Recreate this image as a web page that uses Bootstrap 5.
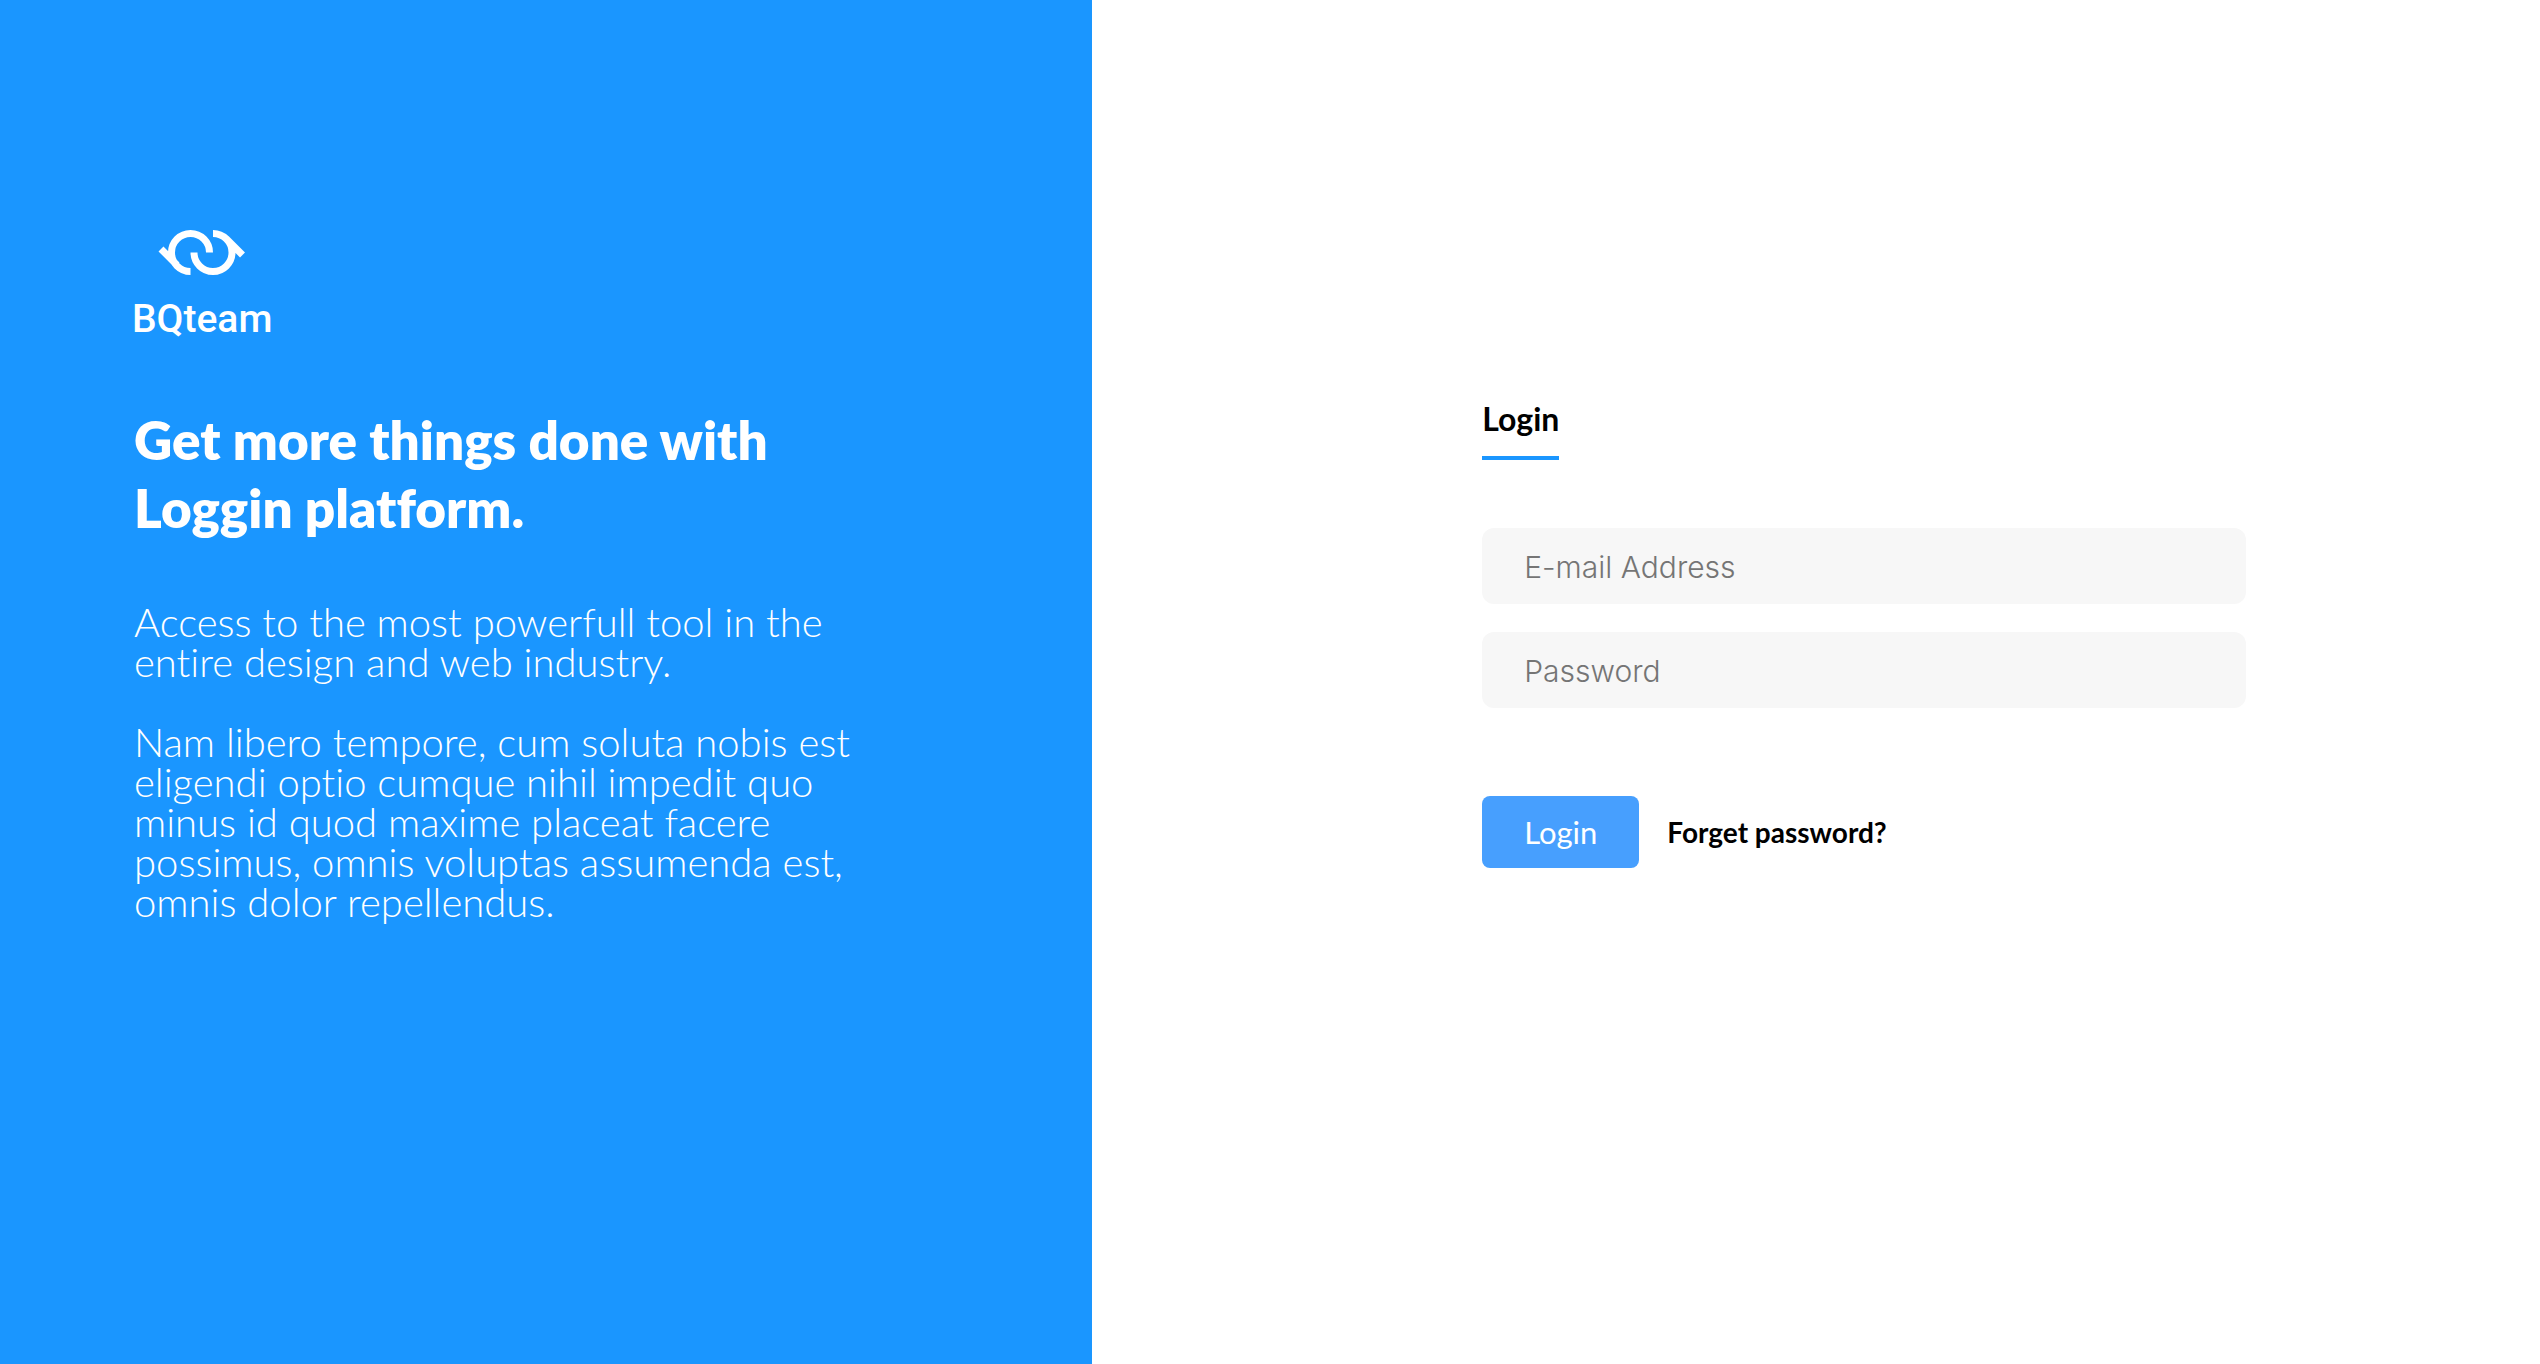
<!DOCTYPE html>
<html lang="en">
<head>
<meta charset="utf-8">
<meta name="viewport" content="width=device-width, initial-scale=1">
<title>BQteam – Login</title>
<link href="https://cdn.jsdelivr.net/npm/bootstrap@5.3.0/dist/css/bootstrap.min.css" rel="stylesheet">
<style>
body { font-family: Lato, "Open Sans", sans-serif; font-variant-ligatures: none; color: #000; background: #fff; }
.intro { width: 43%; background: #1a96ff; padding: 228px 134px 64px; }
.intro-logo { width: 160px; height: 120px; margin-left: -4px; }
.intro-logo text { font-family: Roboto, sans-serif; font-size: 39px; font-weight: 500; }
.intro-title { font-size: 53px; line-height: 68px; font-weight: 800; margin: 58px 0 60px; max-width: 720px; }
.intro-copy { font-size: 40px; line-height: 40px; font-weight: 300; max-width: 740px; }
.intro-copy p { margin-bottom: 40px; }
.login-side { padding: 396px 294px 64px 390px; }
.login-tab { font-size: 32px; line-height: 46px; font-weight: 700; padding-bottom: 14px; border-bottom: 4px solid #1a96ff; color: #000; }
.login-fields { margin-top: 68px; gap: 28px; }
.login-input { height: 76px; padding: 2px 42px 0; border: 0; border-radius: 12px; background: #f7f7f7; font-family: Inter, sans-serif; font-weight: 300; font-size: 30px; }
.login-input:focus { background: #f7f7f7; }
.login-input::placeholder { color: #757575; }
.login-actions { margin-top: 88px; gap: 28px; }
.login-btn { height: 72px; padding: 0 42px; border: 0; border-radius: 8px; background: #479ffe; font-size: 31px; line-height: 70px; }
.login-forgot { font-size: 28px; font-weight: 700; color: #000; }
</style>
</head>
<body>
<main class="d-flex min-vh-100">
  <section class="intro flex-shrink-0 text-white">
    <svg class="intro-logo d-block" viewBox="0 0 160 120" role="img" aria-label="BQteam">
      <g fill="none" stroke="#fff" stroke-width="7">
        <path d="M79.500 24.500A19 19 0 1 0 60.500 43.500M31 21L47 37"/>
        <path d="M64 24.500A19 19 0 1 0 83 5.500M112.500 27L96.500 11"/>
      </g>
      <text x="2" y="104" fill="#fff">BQteam</text>
    </svg>
    <h1 class="intro-title">Get more things done with Loggin platform.</h1>
    <div class="intro-copy">
      <p>Access to the most powerfull tool in the<br>entire design and web industry.</p>
      <p>Nam libero tempore, cum soluta nobis est<br>eligendi optio cumque nihil impedit quo<br>minus id quod maxime placeat facere<br>possimus, omnis voluptas assumenda est,<br>omnis dolor repellendus.</p>
    </div>
  </section>
  <section class="login-side flex-grow-1">
    <a class="login-tab d-inline-block text-decoration-none" href="#login" aria-current="page">Login</a>
    <form id="login">
      <div class="login-fields d-flex flex-column">
        <input class="login-input form-control shadow-none" type="email" placeholder="E-mail Address" aria-label="E-mail Address">
        <input class="login-input form-control shadow-none" type="password" placeholder="Password" aria-label="Password">
      </div>
      <div class="login-actions d-flex align-items-center">
        <button class="login-btn btn btn-primary" type="submit">Login</button>
        <a class="login-forgot text-decoration-none" href="#forgot">Forget password?</a>
      </div>
    </form>
  </section>
</main>
<script src="https://cdn.jsdelivr.net/npm/bootstrap@5.3.0/dist/js/bootstrap.bundle.min.js"></script>
</body>
</html>
